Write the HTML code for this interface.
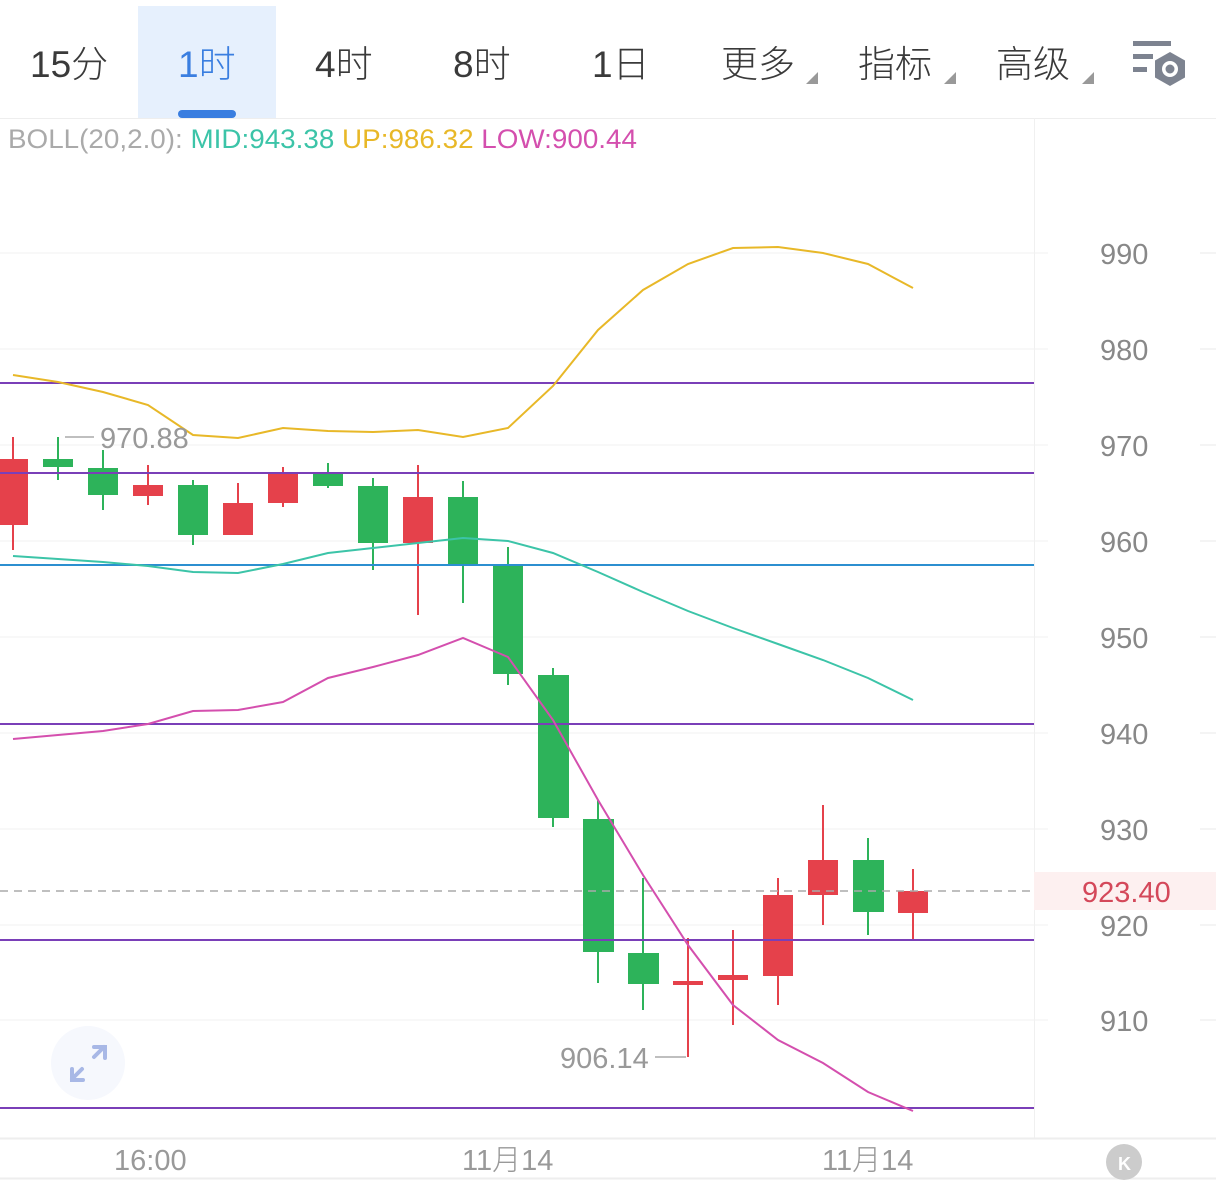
<!DOCTYPE html>
<html><head><meta charset="utf-8"><style>
body{margin:0;width:1216px;height:1188px;background:#fff;overflow:hidden;font-family:"Liberation Sans","Noto Sans CJK SC",sans-serif;}
svg{position:absolute;left:0;top:0}
</style></head><body>
<svg width="1216" height="1188" xmlns="http://www.w3.org/2000/svg" font-family="Liberation Sans, Noto Sans CJK SC, sans-serif">
<rect x="138" y="6" width="138" height="112" fill="#e6f0fd"/>
<rect x="178" y="110" width="58" height="8" rx="4" fill="#3a7ee0"/>
<g font-size="37" fill="#3a3a3a" font-weight="300">
<text x="30" y="77">15分</text>
<text x="178" y="77" fill="#3a7ee0">1时</text>
<text x="315" y="77">4时</text>
<text x="453" y="77">8时</text>
<text x="592" y="77">1日</text>
<text x="721" y="77">更多</text>
<text x="858" y="77">指标</text>
<text x="996" y="77">高级</text>
</g>
<g fill="#999"><polygon points="818,72 818,84 806,84"/><polygon points="956,72 956,84 944,84"/><polygon points="1094,72 1094,84 1082,84"/></g>
<g fill="#7d8390"><rect x="1133" y="41" width="38" height="5"/><rect x="1133" y="54" width="20" height="5"/><rect x="1133" y="67" width="14" height="5"/>
<polygon points="1170,52 1185,60.5 1185,77.5 1170,86 1155,77.5 1155,60.5"/></g>
<circle cx="1170" cy="69" r="8" fill="#fff"/><circle cx="1170" cy="69" r="4.5" fill="#7d8390"/>
<line x1="0" y1="118.5" x2="1216" y2="118.5" stroke="#eee"/>
<line x1="1034.5" y1="118" x2="1034.5" y2="1138" stroke="#f0f0f0"/>
<text x="8" y="148" font-size="27" font-weight="300" textLength="629" lengthAdjust="spacingAndGlyphs"><tspan fill="#aaa">BOLL(20,2.0): </tspan><tspan fill="#3cc4a8">MID:943.38 </tspan><tspan fill="#e8b828">UP:986.32 </tspan><tspan fill="#d44fae">LOW:900.44</tspan></text>
<g stroke="#f2f2f2" stroke-width="1">
<line x1="0" y1="253" x2="1048" y2="253"/><line x1="0" y1="349" x2="1048" y2="349"/><line x1="0" y1="445" x2="1048" y2="445"/><line x1="0" y1="541" x2="1048" y2="541"/><line x1="0" y1="637" x2="1048" y2="637"/><line x1="0" y1="733" x2="1048" y2="733"/><line x1="0" y1="829" x2="1048" y2="829"/><line x1="0" y1="925" x2="1048" y2="925"/><line x1="0" y1="1020" x2="1048" y2="1020"/>
</g>
<g stroke="#e8e8e8"><line x1="1200" y1="253" x2="1216" y2="253"/><line x1="1200" y1="349" x2="1216" y2="349"/><line x1="1200" y1="445" x2="1216" y2="445"/><line x1="1200" y1="541" x2="1216" y2="541"/><line x1="1200" y1="637" x2="1216" y2="637"/><line x1="1200" y1="733" x2="1216" y2="733"/><line x1="1200" y1="829" x2="1216" y2="829"/><line x1="1200" y1="925" x2="1216" y2="925"/><line x1="1200" y1="1020" x2="1216" y2="1020"/></g>
<rect x="1034" y="872" width="182" height="38" fill="#fdf0f0"/>
<g font-size="29" fill="#888" font-weight="300">
<text x="1100" y="264">990</text><text x="1100" y="360">980</text><text x="1100" y="456">970</text><text x="1100" y="552">960</text><text x="1100" y="648">950</text><text x="1100" y="744">940</text><text x="1100" y="840">930</text><text x="1100" y="936">920</text><text x="1100" y="1031">910</text>
</g>
<text x="1082" y="902" font-size="29" fill="#d4485a" font-weight="300">923.40</text>
<g stroke-width="2">
<g stroke="#e5414b" fill="#e5414b">
<line x1="13" y1="437" x2="13" y2="550"/><rect x="-2" y="459" width="30" height="66" stroke="none"/>
<line x1="148" y1="465" x2="148" y2="505"/><rect x="133" y="485" width="30" height="11" stroke="none"/>
<line x1="238" y1="483" x2="238" y2="535"/><rect x="223" y="503" width="30" height="32" stroke="none"/>
<line x1="283" y1="467" x2="283" y2="507"/><rect x="268" y="474" width="30" height="29" stroke="none"/>
<line x1="418" y1="465" x2="418" y2="615"/><rect x="403" y="497" width="30" height="46" stroke="none"/>
<line x1="688" y1="938" x2="688" y2="1057"/><rect x="673" y="981" width="30" height="4" stroke="none"/>
<line x1="733" y1="930" x2="733" y2="1025"/><rect x="718" y="975" width="30" height="5" stroke="none"/>
<line x1="778" y1="878" x2="778" y2="1005"/><rect x="763" y="895" width="30" height="81" stroke="none"/>
<line x1="823" y1="805" x2="823" y2="925"/><rect x="808" y="860" width="30" height="35" stroke="none"/>
<line x1="913" y1="869" x2="913" y2="939"/><rect x="898" y="891" width="30" height="22" stroke="none"/>
</g>
<g stroke="#2db35a" fill="#2db35a">
<line x1="58" y1="437" x2="58" y2="480"/><rect x="43" y="459" width="30" height="8" stroke="none"/>
<line x1="103" y1="450" x2="103" y2="510"/><rect x="88" y="468" width="30" height="27" stroke="none"/>
<line x1="193" y1="480" x2="193" y2="545"/><rect x="178" y="485" width="30" height="50" stroke="none"/>
<line x1="328" y1="463" x2="328" y2="488"/><rect x="313" y="474" width="30" height="12" stroke="none"/>
<line x1="373" y1="478" x2="373" y2="570"/><rect x="358" y="486" width="30" height="57" stroke="none"/>
<line x1="463" y1="481" x2="463" y2="603"/><rect x="448" y="497" width="30" height="68" stroke="none"/>
<line x1="508" y1="547" x2="508" y2="685"/><rect x="493" y="566" width="30" height="108" stroke="none"/>
<line x1="553" y1="668" x2="553" y2="827"/><rect x="538" y="675" width="31" height="143" stroke="none"/>
<line x1="598" y1="800" x2="598" y2="983"/><rect x="583" y="819" width="31" height="133" stroke="none"/>
<line x1="643" y1="878" x2="643" y2="1010"/><rect x="628" y="953" width="31" height="31" stroke="none"/>
<line x1="868" y1="838" x2="868" y2="935"/><rect x="853" y="860" width="31" height="52" stroke="none"/>
</g></g>
<g stroke="#7a3fb8" stroke-width="2">
<line x1="0" y1="383" x2="1034" y2="383"/><line x1="0" y1="473" x2="1034" y2="473"/><line x1="0" y1="724" x2="1034" y2="724"/><line x1="0" y1="940" x2="1034" y2="940"/><line x1="0" y1="1108" x2="1034" y2="1108"/>
</g>
<line x1="0" y1="565" x2="1034" y2="565" stroke="#2c8fd0" stroke-width="2"/>
<line x1="0" y1="891" x2="1034" y2="891" stroke="#aaa" stroke-width="1.5" stroke-dasharray="8,6"/>
<g fill="none" stroke-width="2">
<polyline stroke="#e8b828" points="13,375 58,382 103,392 148,405 193,435 238,438 283,428 328,431 373,432 418,430 463,437 508,428 553,386 598,330 643,290 688,264 733,248 778,247 823,253 868,264 913,288"/>
<polyline stroke="#3cc4a8" points="13,556 58,559 103,562 148,566 193,572 238,573 283,564 328,553 373,548 418,543 463,538 508,541 553,553 598,572 643,592 688,611 733,628 778,644 823,660 868,678 913,700"/>
<polyline stroke="#d44fae" points="13,739 58,735 103,731 148,724 193,711 238,710 283,702 328,678 373,667 418,655 463,638 508,657 553,720 598,800 643,875 688,945 733,1005 778,1040 823,1063 868,1092 913,1111"/>
</g>
<line x1="65" y1="437" x2="94" y2="437" stroke="#aaa" stroke-width="1.5"/>
<text x="100" y="448" font-size="29" fill="#999" font-weight="300">970.88</text>
<line x1="655" y1="1057" x2="686" y2="1057" stroke="#aaa" stroke-width="1.5"/>
<text x="560" y="1068" font-size="29" fill="#999" font-weight="300">906.14</text>
<circle cx="88" cy="1063" r="37" fill="#f6f8fd"/>
<g stroke="#a8b8e6" stroke-width="4" fill="none" stroke-linecap="round">
<line x1="82" y1="1069" x2="72" y2="1079"/><polyline points="72,1069 72,1080 83,1080"/>
<line x1="94" y1="1057" x2="104" y2="1047"/><polyline points="94,1047 105,1047 105,1058"/>
</g>
<line x1="0" y1="1138.5" x2="1216" y2="1138.5" stroke="#eee" stroke-width="2"/>
<line x1="0" y1="1178.5" x2="1216" y2="1178.5" stroke="#eee" stroke-width="2"/>
<g font-size="29" fill="#999" font-weight="300">
<text x="114" y="1170">16:00</text><text x="462" y="1170">11月14</text><text x="822" y="1170">11月14</text>
</g>
<circle cx="1124" cy="1162" r="18" fill="#ccc"/>
<text x="1118" y="1170" font-size="18" fill="#fff" font-weight="bold">K</text>
</svg>
</body></html>
